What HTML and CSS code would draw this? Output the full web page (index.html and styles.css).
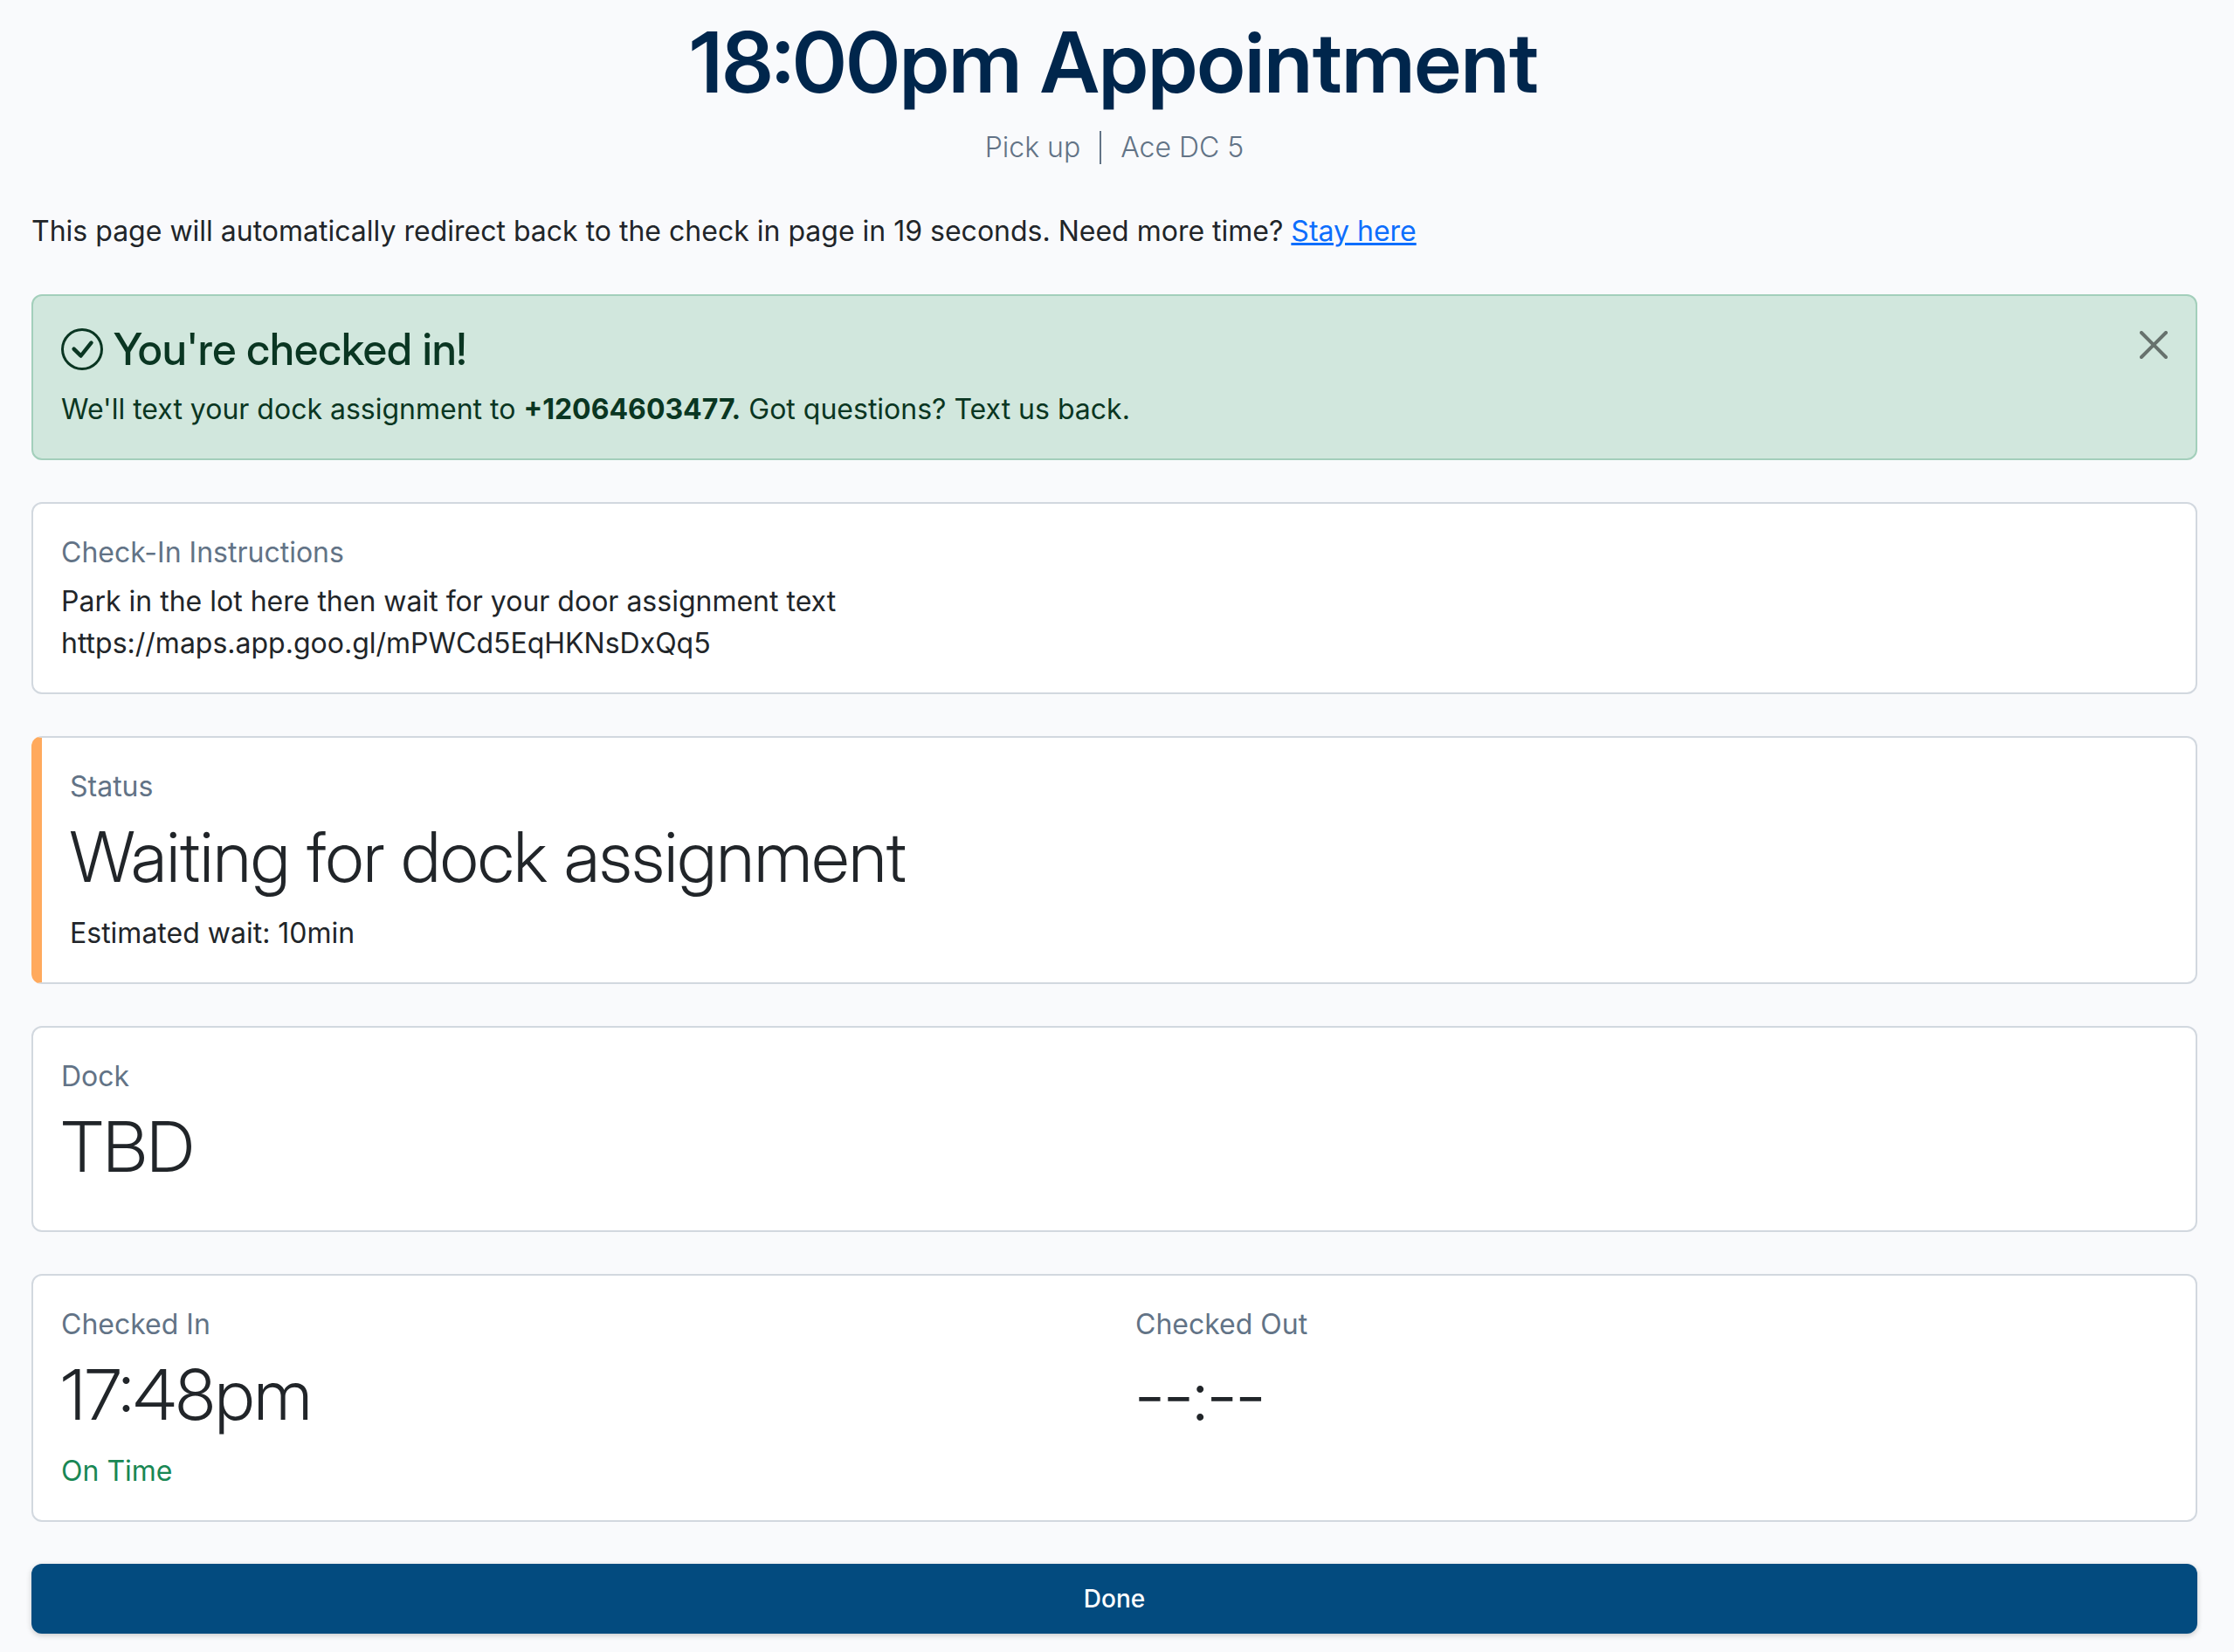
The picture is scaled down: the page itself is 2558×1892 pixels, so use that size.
FILE: index.html
```html
<!DOCTYPE html>
<html lang="en">
<head>
<meta charset="utf-8">
<meta name="viewport" content="width=device-width, initial-scale=1">
<title>18:00pm Appointment</title>
<link rel="stylesheet" href="styles.css">
</head>
<body>
<main class="page">
  <header class="header">
    <h1 class="title">18:00pm Appointment</h1>
    <div class="subtitle">
      <span>Pick up</span>
      <span class="divider"></span>
      <span>Ace DC 5</span>
    </div>
  </header>

  <p class="text">This page will automatically redirect back to the check in page in 19 seconds. Need more time? <a class="link" href="#">Stay here</a></p>

  <section class="alert" role="alert">
    <div class="alert-body">
      <h2 class="alert-title">
        <svg class="alert-icon" viewBox="0 0 16 16" fill="currentColor" aria-hidden="true">
          <path d="M8 15A7 7 0 1 1 8 1a7 7 0 0 1 0 14m0 1A8 8 0 1 0 8 0a8 8 0 0 0 0 16"/>
          <path d="m10.97 4.97-.02.022-3.473 4.425-2.093-2.094a.75.75 0 0 0-1.06 1.06L6.97 11.03a.75.75 0 0 0 1.079-.02l3.992-4.99a.75.75 0 0 0-1.071-1.05"/>
        </svg>
        <span>You're checked in!</span>
      </h2>
      <p class="text">We'll text your dock assignment to <strong class="phone">+12064603477.</strong> Got questions? Text us back.</p>
    </div>
    <button class="close" type="button" aria-label="Close">
      <svg class="close-icon" viewBox="0 0 16 16" fill="currentColor" aria-hidden="true">
        <path d="M.293.293a1 1 0 0 1 1.414 0L8 6.586 14.293.293a1 1 0 1 1 1.414 1.414L9.414 8l6.293 6.293a1 1 0 0 1-1.414 1.414L8 9.414l-6.293 6.293a1 1 0 0 1-1.414-1.414L6.586 8 .293 1.707a1 1 0 0 1 0-1.414"/>
      </svg>
    </button>
  </section>

  <section class="card">
    <h2 class="label">Check-In Instructions</h2>
    <p class="text">Park in the lot here then wait for your door assignment text<br>https://maps.app.goo.gl/mPWCd5EqHKNsDxQq5</p>
  </section>

  <section class="card card-waiting">
    <h2 class="label">Status</h2>
    <p class="value">Waiting for dock assignment</p>
    <p class="text">Estimated wait: 10min</p>
  </section>

  <section class="card">
    <h2 class="label">Dock</h2>
    <p class="value">TBD</p>
  </section>

  <section class="card times">
    <div>
      <h2 class="label">Checked In</h2>
      <p class="value">17:48pm</p>
      <p class="text on-time">On Time</p>
    </div>
    <div>
      <h2 class="label">Checked Out</h2>
      <p class="value">--:--</p>
    </div>
  </section>

  <button class="done" type="button">Done</button>
</main>
</body>
</html>
```

FILE: styles.css
```css
* {
  box-sizing: border-box;
}

body {
  margin: 0;
  background: #f9fafc;
  color: #212529;
  font-family: Inter, "Liberation Sans", sans-serif;
  font-size: 32px;
  line-height: 48px;
}

h1, h2, p {
  margin: 0;
}

.page {
  display: flex;
  flex-direction: column;
  gap: 48px;
  padding: 13px 42px 21px 36px;
}

.header {
  display: flex;
  flex-direction: column;
  align-items: center;
  gap: 16px;
}

.title,
.alert-title,
.value {
  font-family: "Inter Display", Inter, "Liberation Sans", sans-serif;
}

.title {
  color: #00264c;
  font-size: 96px;
  font-weight: 600;
  line-height: 116px;
  text-align: center;
}

.subtitle {
  display: flex;
  align-items: center;
  gap: 22px;
  color: #627386;
  font-weight: 300;
}

.divider {
  width: 2px;
  height: 38px;
  background: #627386;
}

.link {
  color: #0d6efd;
  text-decoration: underline;
  text-decoration-thickness: 3px;
}

.alert {
  display: flex;
  align-items: flex-start;
  justify-content: space-between;
  gap: 32px;
  padding: 32px;
  border: 2px solid #a3cfbb;
  border-radius: 12px;
  background: #d1e7dd;
  color: #0a3622;
}

.alert-title {
  display: flex;
  align-items: center;
  gap: 12px;
  margin-bottom: 16px;
  font-size: 50px;
  font-weight: 500;
  line-height: 58px;
}

.alert-icon {
  flex: none;
  width: 48px;
  height: 48px;
}

.phone {
  font-weight: 700;
}

.close {
  display: flex;
  padding: 8px 0;
  border: 0;
  background: none;
  color: #000;
  opacity: 0.5;
  cursor: pointer;
}

.close-icon {
  width: 32px;
  height: 32px;
}

.card {
  padding: 32px;
  border: 2px solid #d2d8df;
  border-radius: 12px;
  background: #fff;
}

.card-waiting {
  border-left: 12px solid #ffaa5d;
}

.label {
  margin-bottom: 8px;
  color: #627386;
  font-size: 32px;
  font-weight: 400;
  line-height: 48px;
}

.value {
  margin-bottom: 16px;
  font-size: 80px;
  font-weight: 300;
  line-height: 96px;
}

.times {
  display: grid;
  grid-template-columns: 1fr 1fr;
  gap: 48px;
}

.on-time {
  color: #198754;
}

.done {
  padding: 18px 24px;
  border: 0;
  border-radius: 12px;
  background: #034b7f;
  box-shadow: 0 2px 6px rgba(0, 0, 0, 0.2);
  color: #fff;
  font-family: inherit;
  font-size: 28px;
  font-weight: 500;
  line-height: 44px;
  cursor: pointer;
}
```
